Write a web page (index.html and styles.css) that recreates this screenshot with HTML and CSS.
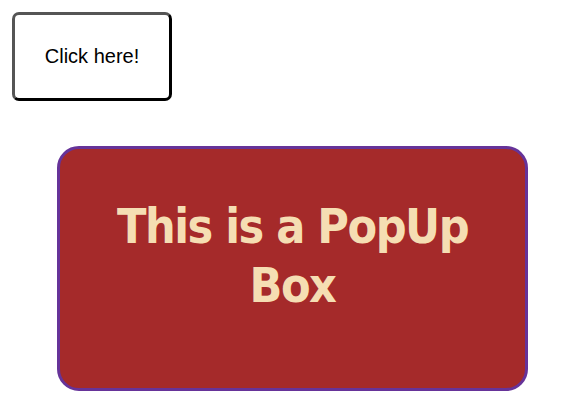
FILE: index.html
```html
<!DOCTYPE html>
<html>
<head>
<meta charset="utf-8">
<link rel="stylesheet" href="styles.css">
</head>
<body>
<button class="trigger">Click here!</button>
<div class="popup">
  <p class="popup-text">This is a PopUp Box</p>
</div>
</body>
</html>
```
FILE: styles.css
```css
html, body {
  background: #ffffff;
}
body {
  margin: 8px;
  display: flex;
  flex-direction: column;
  align-items: flex-start;
}
.trigger {
  margin: 4px;
  width: 160px;
  height: 89px;
  box-sizing: border-box;
  border: 3px outset #000000;
  border-top-color: #555555;
  border-left-color: #555555;
  border-right-color: #000000;
  border-bottom-color: #000000;
  border-radius: 7px;
  background: #ffffff;
  font-family: "Liberation Sans", Arial, sans-serif;
  font-size: 20px;
  color: #000000;
  padding: 0;
}
.popup {
  margin: 41px 0 0 49px;
  width: 471px;
  height: 245px;
  box-sizing: border-box;
  border: 3px solid #663399;
  border-radius: 22px;
  background: #a52a2a;
  display: flex;
  justify-content: center;
  padding: 48px 30px 0;
}
.popup-text {
  margin: 0;
  text-align: center;
  font-family: "DejaVu Sans Condensed", "DejaVu Sans", sans-serif;
  font-stretch: condensed;
  font-weight: bold;
  font-size: 48px;
  letter-spacing: -1.5px;
  line-height: 59px;
  color: #f5deb3;
}
```
